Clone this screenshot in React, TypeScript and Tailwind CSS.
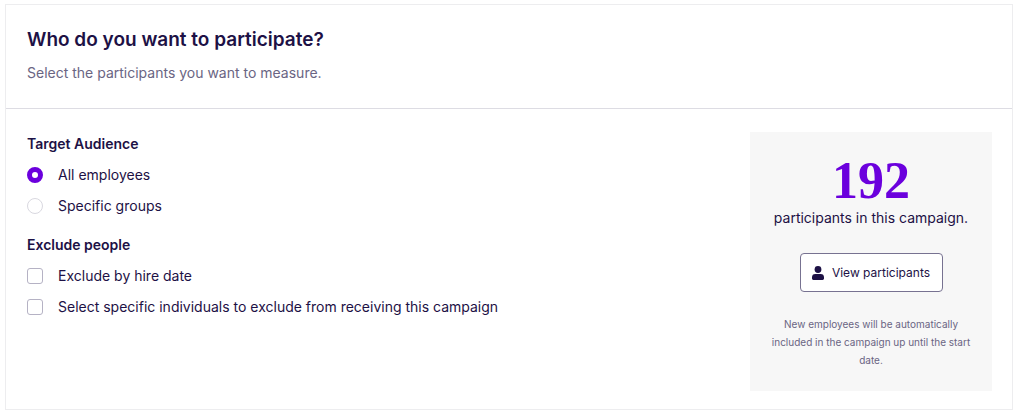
import { useState } from "react";

const audiences = [
  { id: "all", label: "All employees" },
  { id: "groups", label: "Specific groups" },
];

const exclusions = [
  { id: "hire-date", label: "Exclude by hire date" },
  {
    id: "individuals",
    label: "Select specific individuals to exclude from receiving this campaign",
  },
];

function PersonIcon() {
  return (
    <svg viewBox="0 0 12 14" className="h-[14px] w-3 shrink-0" fill="currentColor" aria-hidden="true">
      <circle cx="6" cy="3.5" r="3.4" />
      <path d="M3.4 7.9h5.2A3.4 3.4 0 0 1 12 11.3v1.2c0 .8-.6 1.4-1.4 1.4H1.4C.6 13.9 0 13.3 0 12.5v-1.2a3.4 3.4 0 0 1 3.4-3.4z" />
    </svg>
  );
}

export default function App() {
  const [audience, setAudience] = useState("all");

  return (
    <main className="bg-white pt-1 pr-[7px] pb-1 pl-[5px] font-['Inter','Liberation_Sans',sans-serif] text-[#1d1145]">
      <section className="border border-[#ededef]">
        <header className="border-b border-[#dddce3] px-[21px] pt-[21px] pb-[23px]">
          <h1 className="text-[19px] leading-7 font-semibold">Who do you want to participate?</h1>
          <p className="mt-[7px] text-sm leading-6 text-[#6a6583]">Select the participants you want to measure.</p>
        </header>

        <div className="flex items-start justify-between gap-6 px-5 pt-[23px] pb-[18px]">
          <form className="flex flex-col gap-[15px] pl-px text-sm leading-6">
            <fieldset className="flex flex-col gap-[7px]">
              <legend className="mb-[7px] font-semibold">Target Audience</legend>
              {audiences.map(({ id, label }) => (
                <label key={id} className="flex items-center gap-[15px]">
                  <input
                    type="radio"
                    name="audience"
                    value={id}
                    checked={audience === id}
                    onChange={() => setAudience(id)}
                    className="size-4 shrink-0 appearance-none rounded-full border border-[#d9d8e0] bg-white checked:border-5 checked:border-[#6b00dd]"
                  />
                  {label}
                </label>
              ))}
            </fieldset>
            <fieldset className="flex flex-col gap-[7px]">
              <legend className="mb-[7px] font-semibold">Exclude people</legend>
              {exclusions.map(({ id, label }) => (
                <label key={id} className="flex items-center gap-[15px]">
                  <input
                    type="checkbox"
                    name={id}
                    className="size-4 shrink-0 appearance-none rounded-[3px] border border-[#b5b2c4] bg-white checked:bg-[#6b00dd]"
                  />
                  {label}
                </label>
              ))}
            </fieldset>
          </form>

          <aside className="flex w-[242px] shrink-0 flex-col items-center bg-[#f7f7f7] px-4 pt-6 pb-[22px] text-center">
            <p className="font-['Liberation_Serif',serif] text-[52px] leading-[50px] font-bold text-[#6b00dd]">192</p>
            <p className="text-sm leading-6 whitespace-nowrap">participants in this campaign.</p>
            <button
              type="button"
              className="mt-[23px] flex h-[39px] w-[143px] items-center justify-center gap-2 rounded border border-[#777291] bg-white text-xs whitespace-nowrap"
            >
              <PersonIcon />
              View participants
            </button>
            <p className="mt-[23px] text-[10px] leading-[18px] text-[#6a6583]">
              New employees will be automatically included in the campaign up until the start date.
            </p>
          </aside>
        </div>
      </section>
    </main>
  );
}
